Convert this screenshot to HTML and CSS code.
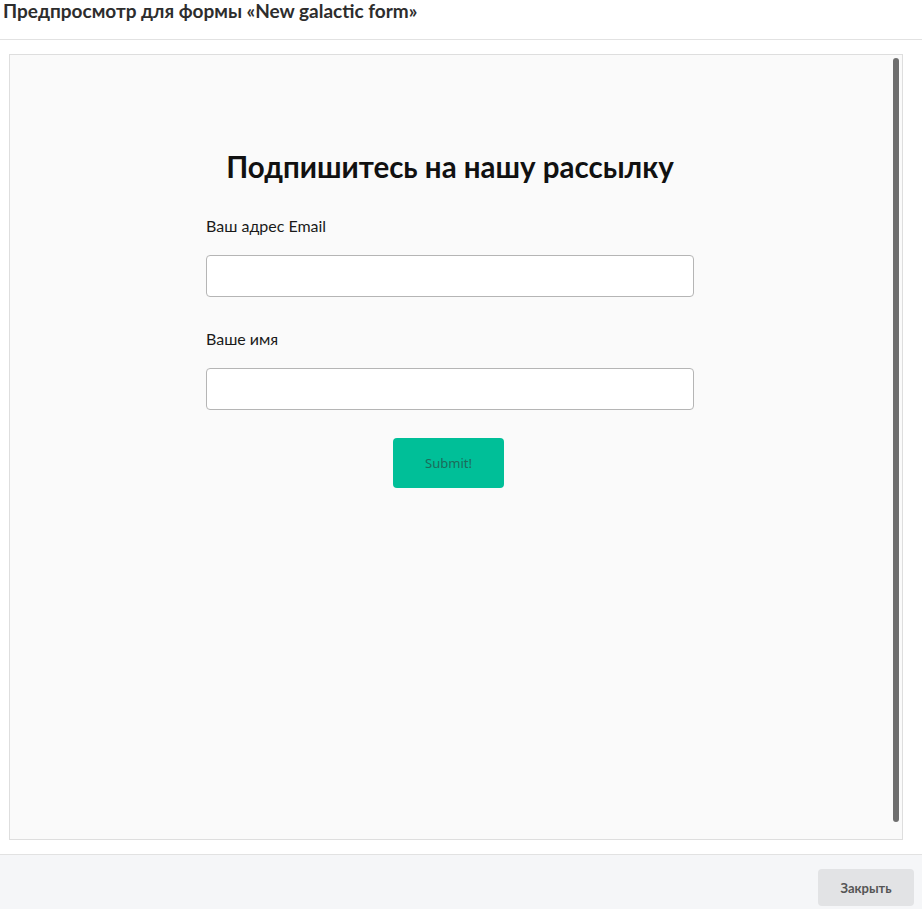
FILE: index.html
```html
<!DOCTYPE html>
<html lang="ru">
	<head>
		<meta charset="UTF-8" />
		<meta name="viewport" content="width=device-width, initial-scale=1.0" />
		<title>Предпросмотр формы</title>
		<link rel="stylesheet" href="styles.css">
	</head>
	<body>
		<div class="modal">
			<div class="modal-header">
				<h1>Предпросмотр для формы «New galactic form»</h1>
			</div>

			<div class="modal-body">
				<div class="preview">
					<form class="sub-form">
						<h2>Подпишитесь на нашу рассылку</h2>
						<div class="form-group">
							<label for="email">Ваш адрес Email</label>
							<input type="email" id="email" name="email">
						</div>
						<div class="form-group">
							<label for="name">Ваше имя</label>
							<input type="text" id="name" name="name">
						</div>
						<div class="form-actions">
							<button type="button" class="btn-submit">Submit!</button>
						</div>
					</form>
					<div class="scroll-thumb"></div>
				</div>
			</div>

			<div class="modal-footer">
				<button type="button" class="btn-close">Закрыть</button>
			</div>
		</div>
	</body>
</html>
```

FILE: styles.css
```css
* {
	box-sizing: border-box;
}

body {
	margin: 0;
	font-family: Lato, "Noto Sans", sans-serif;
	color: #222;
	background: #fff;
}

.modal {
	display: flex;
	flex-direction: column;
	height: 909px;
}

.modal-header {
	height: 40px;
	padding: 0 3px;
	border-bottom: 1px solid #e2e2e2;
}

.modal-header h1 {
	margin: 0;
	padding-top: 0;
	font-size: 19px;
	font-weight: 700;
	line-height: 22px;
	color: #2d2d2d;
}

.modal-body {
	flex: 1;
	padding: 14px 19px 14px 9px;
}

.preview {
	position: relative;
	height: 100%;
	border: 1px solid #dedede;
	background: #fafafa;
	padding: 94px 12px 0 0;
}

.sub-form {
	width: 488px;
	margin: 0 auto;
	display: flex;
	flex-direction: column;
}

.sub-form h2 {
	margin: 0 0 30px;
	text-align: center;
	font-size: 29.5px;
	font-weight: 700;
	line-height: 36px;
	color: #111;
}

.form-group {
	display: flex;
	flex-direction: column;
	margin-bottom: 31px;
}

.form-group label {
	font-size: 16px;
	line-height: 22px;
	color: #1a1a1a;
	margin-bottom: 18px;
}

.form-group input {
	height: 42px;
	border: 1px solid #b5b5b5;
	border-radius: 4px;
	background: #fff;
	font: inherit;
	padding: 0 10px;
}

.form-group + .form-group {
	margin-bottom: 28px;
}

.form-actions {
	display: flex;
	justify-content: center;
	padding-right: 3px;
}

.btn-submit {
	width: 111px;
	height: 50px;
	border: none;
	border-radius: 4px;
	background: #00bf98;
	color: #1d6b5a;
	font-family: "Noto Sans", sans-serif;
	font-size: 13px;
}

.scroll-thumb {
	position: absolute;
	top: 3px;
	right: 3px;
	width: 6px;
	height: 764px;
	border-radius: 3px;
	background: #6e6e6e;
}

.modal-footer {
	height: 55px;
	border-top: 1px solid #e2e2e2;
	background: #f5f6f8;
	display: flex;
	justify-content: flex-end;
	align-items: center;
	padding: 11px 8px 0 0;
}

.btn-close {
	width: 96px;
	height: 37px;
	border: none;
	border-radius: 4px;
	background: #e2e3e5;
	color: #555;
	font-family: inherit;
	font-size: 13px;
	font-weight: 700;
}
```
